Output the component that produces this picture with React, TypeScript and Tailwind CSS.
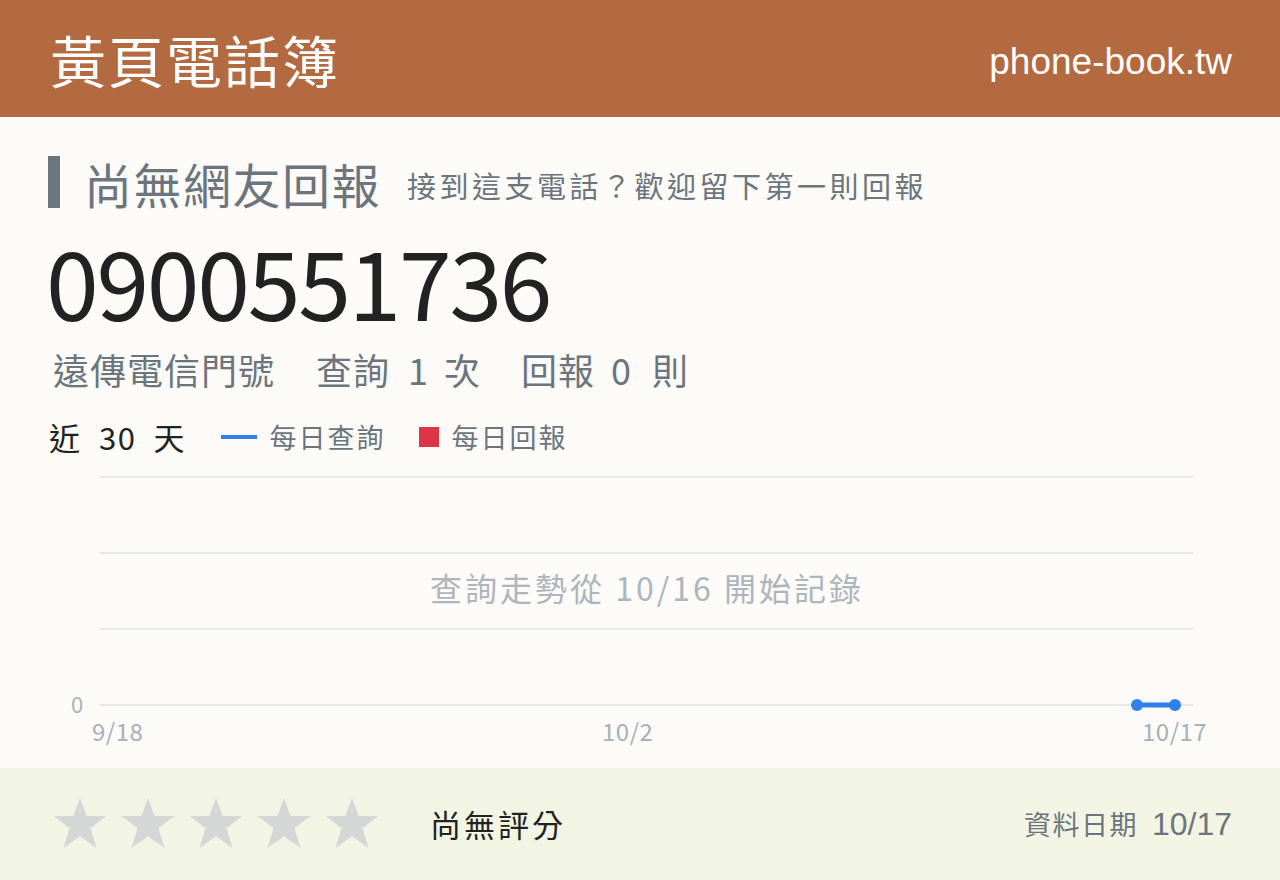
const cjk = { fontFamily: '"Noto Sans CJK TC", "Noto Sans", sans-serif' }

function Star() {
  return (
    <svg width="56" height="54" viewBox="0 0 56 54">
      <polygon
        points="28,1 34.6,19 54.5,19 38.5,31 44.5,51 28,39.3 11.5,51 17.5,31 1.5,19 21.4,19"
        fill="#d5d6d6"
      />
    </svg>
  )
}

function Chart() {
  const lines = [0, 76, 152, 228]
  return (
    <div className="relative h-[260px] mt-[8px]">
      <svg width="1280" height="260" className="absolute left-0 top-0">
        {lines.map((y) => (
          <line key={y} x1="100" x2="1193" y1={y + 12} y2={y + 12} stroke="#e6e8ec" strokeWidth="2" />
        ))}
        <line x1="1137" x2="1175" y1="240" y2="240" stroke="#2f80ea" strokeWidth="5" />
        <circle cx="1137" cy="240" r="6" fill="#2f80ea" />
        <circle cx="1175" cy="240" r="6" fill="#2f80ea" />
      </svg>
      <div className="absolute left-[0px] right-[-14px] top-[98px] text-center text-[32px] tracking-[3px] text-[#adb5bd]" style={cjk}>
        查詢走勢從 10/16 開始記錄
      </div>
      <div className="absolute left-[71px] top-[222px] text-[22px] text-[#a8b0b9]" style={cjk}>0</div>
      <div className="absolute left-[92px] top-[248px] text-[24px] tracking-[0.5px] text-[#a8b0b9]" style={cjk}>9/18</div>
      <div className="absolute left-[602px] top-[248px] text-[24px] tracking-[0.5px] text-[#a8b0b9]" style={cjk}>10/2</div>
      <div className="absolute left-[1142px] top-[248px] text-[24px] tracking-[0.5px] text-[#a8b0b9]" style={cjk}>10/17</div>
    </div>
  )
}

export default function App() {
  return (
    <div className="w-[1280px] h-[880px] flex flex-col bg-[#fcfbf8] overflow-hidden">
      <header className="h-[117px] shrink-0 bg-[#b46a40] flex items-center justify-between pl-[50px] pr-[48px]">
        <div className="text-white text-[56px] tracking-[2px] leading-none" style={cjk}>黃頁電話簿</div>
        <div className="text-white text-[37px] leading-none mt-[6px]" style={{ fontFamily: '"Liberation Sans", Arial, sans-serif' }}>
          phone-book.tw
        </div>
      </header>

      <main className="flex-1 flex flex-col pt-[38px]">
        <div className="flex items-end pl-[48px]" style={cjk}>
          <div className="w-[12px] h-[52px] bg-[#6c757d] mb-[3px]" />
          <div className="ml-[24px] text-[48px] leading-[56px] tracking-[1.5px] text-[#6c757d]">尚無網友回報</div>
          <div className="ml-[26px] mb-[6px] text-[29px] tracking-[3.5px] leading-[40px] text-[#6c757d]">
            接到這支電話？歡迎留下第一則回報
          </div>
        </div>

        <div className="pl-[46px] mt-[19px] text-[95px] leading-[100px] tracking-[-2.3px] text-[#222]" style={cjk}>
          0900551736
        </div>

        <div className="pl-[53px] mt-[19px] text-[36px] leading-[40px] tracking-[1px] text-[#6c757d] flex" style={cjk}>
          <span>遠傳電信門號</span>
          <span className="ml-[41px]">查詢</span>
          <span className="ml-[18px]">1</span>
          <span className="ml-[15px]">次</span>
          <span className="ml-[40px]">回報</span>
          <span className="ml-[16px]">0</span>
          <span className="ml-[20px]">則</span>
        </div>

        <div className="pl-[49px] mt-[28px] flex items-center h-[40px]" style={cjk}>
          <span className="text-[31px] text-[#222]">近</span>
          <span className="ml-[19px] text-[31px] tracking-[1.5px] text-[#222]">30</span>
          <span className="ml-[17px] text-[31px] text-[#222]">天</span>
          <span className="ml-[37px] w-[36px] h-[4px] bg-[#2f80ea]" />
          <span className="ml-[12px] text-[27px] tracking-[2px] text-[#6c757d]">每日查詢</span>
          <span className="ml-[34px] w-[20px] h-[20px] bg-[#dc3545]" />
          <span className="ml-[12px] text-[27px] tracking-[2px] text-[#6c757d]">每日回報</span>
        </div>

        <Chart />
      </main>

      <footer className="h-[112px] shrink-0 bg-[#f2f5e3] flex items-center pl-[52px] pr-[48px]" style={cjk}>
        <div className="flex gap-[12px]">
          <Star />
          <Star />
          <Star />
          <Star />
          <Star />
        </div>
        <div className="ml-[50px] text-[31px] tracking-[3px] text-[#222]">尚無評分</div>
        <div className="ml-auto flex items-baseline text-[#6c757d]">
          <span className="text-[27px] tracking-[1.5px]">資料日期</span>
          <span className="ml-[14px] text-[32px]" style={{ fontFamily: '"Liberation Sans", Arial, sans-serif' }}>10/17</span>
        </div>
      </footer>
    </div>
  )
}
